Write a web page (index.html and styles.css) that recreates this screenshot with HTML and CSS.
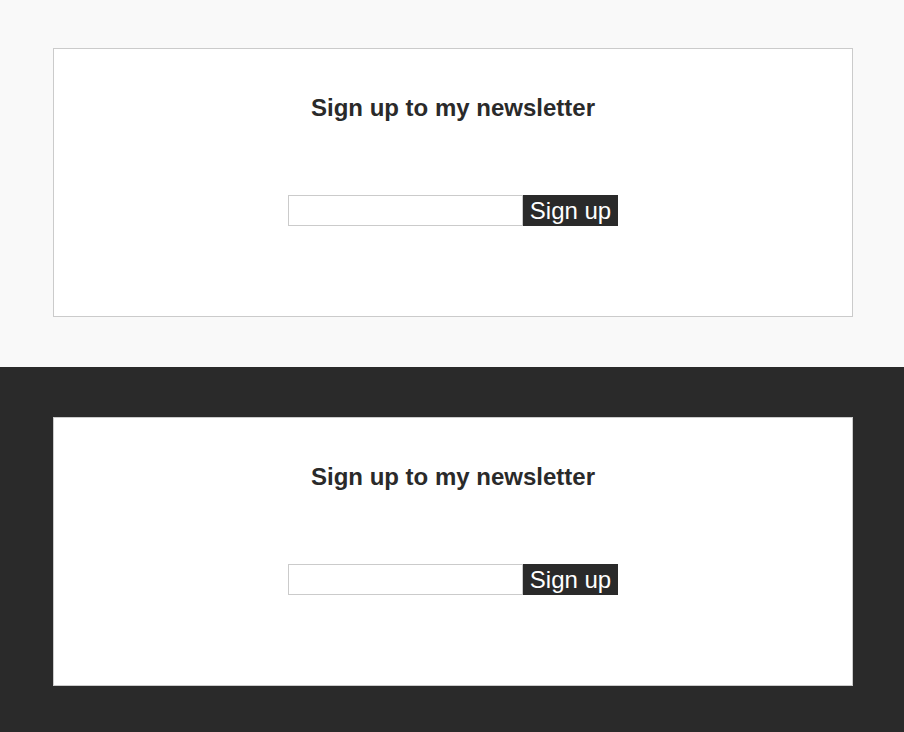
FILE: index.html
```html
<!DOCTYPE html>
<html lang="en">
<head>
<meta charset="utf-8">
<title>Newsletter</title>
<link rel="stylesheet" href="styles.css">
</head>
<body>
<section class="band band-light">
  <div class="card">
    <h2 class="title">Sign up to my newsletter</h2>
    <form class="form">
      <input class="field" type="email" aria-label="Email">
      <button class="btn" type="button">Sign up</button>
    </form>
  </div>
</section>
<section class="band band-dark">
  <div class="card">
    <h2 class="title">Sign up to my newsletter</h2>
    <form class="form">
      <input class="field" type="email" aria-label="Email">
      <button class="btn" type="button">Sign up</button>
    </form>
  </div>
</section>
</body>
</html>
```
FILE: styles.css
```css
* { box-sizing: border-box; }
html, body { margin: 0; padding: 0; }
body {
  font-family: "Liberation Sans", Arial, Helvetica, sans-serif;
  color: #2a2a2a;
  background: #2a2a2a;
}
.band {
  padding: 48px 51px 50px 53px;
}
.band-light { background: #f9f9f9; }
.band-dark { background: #2a2a2a; padding-top: 50px; }
.card {
  width: 800px;
  height: 269px;
  background: #fff;
  border: 1px solid #cbcbcb;
  padding-top: 45px;
  display: flex;
  flex-direction: column;
  align-items: center;
}
.title {
  margin: 0;
  font-size: 24px;
  line-height: 28px;
  font-weight: bold;
  color: #2a2a2a;
}
.form {
  margin: 73px 0 0 0;
  display: flex;
}
.field {
  width: 235px;
  height: 31px;
  margin: 0;
  border: 1px solid #cbcbcb;
  background: #fff;
  padding: 0 4px;
  font: inherit;
  outline: none;
}
.btn {
  width: 95px;
  height: 31px;
  margin: 0;
  border: 0;
  background: #2a2a2a;
  color: #fff;
  font-family: "Liberation Sans", Arial, Helvetica, sans-serif;
  font-size: 24px;
  line-height: 31px;
  padding: 0;
  cursor: pointer;
}
```
